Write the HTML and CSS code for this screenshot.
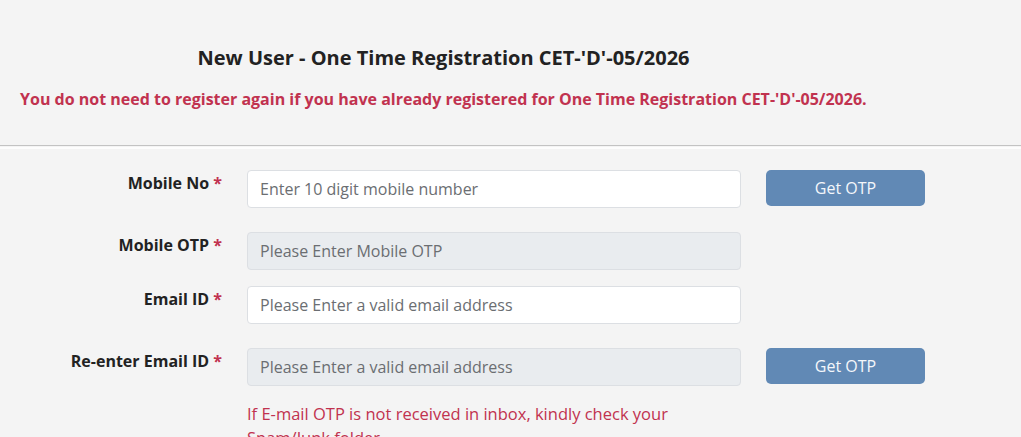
FILE: index.html
```html
<!DOCTYPE html>
<html lang="en">
<head>
    <meta charset="UTF-8">
    <meta name="viewport" content="width=device-width, initial-scale=1.0">
    <title>One Time Registration</title>
    <link rel="stylesheet" href="styles.css">
</head>
<body>
    <div class="reg-header">
        <h3 class="reg-title">New User - One Time Registration CET-'D'-05/2026</h3>
        <p class="reg-notice">You do not need to register again if you have already registered for One Time Registration CET-'D'-05/2026.</p>
    </div>
    <hr class="divider">

    <form class="reg-form" onsubmit="return false;">
        <div class="form-row row-wide">
            <label class="form-label" for="mobile">Mobile No <span class="req">*</span></label>
            <input class="form-control" id="mobile" type="text" placeholder="Enter 10 digit mobile number">
            <button class="btn-otp" type="button">Get OTP</button>
        </div>
        <div class="form-row row-narrow">
            <label class="form-label" for="mobile-otp">Mobile OTP <span class="req">*</span></label>
            <input class="form-control" id="mobile-otp" type="text" placeholder="Please Enter Mobile OTP" disabled>
        </div>
        <div class="form-row row-wide">
            <label class="form-label" for="email">Email ID <span class="req">*</span></label>
            <input class="form-control" id="email" type="email" placeholder="Please Enter a valid email address">
        </div>
        <div class="form-row">
            <label class="form-label" for="email2">Re-enter Email ID <span class="req">*</span></label>
            <input class="form-control" id="email2" type="email" placeholder="Please Enter a valid email address" disabled>
            <button class="btn-otp" type="button">Get OTP</button>
        </div>
        <div class="form-row">
            <span></span>
            <p class="spam-note">If E-mail OTP is not received in inbox, kindly check your Spam/Junk folder.</p>
        </div>
    </form>
</body>
</html>
```

FILE: styles.css
```css
body {
    margin: 0;
    background-color: #f4f4f4;
    font-family: "Open Sans", "Noto Sans", Arial, sans-serif;
    color: #212529;
}
.reg-header {
    padding: 45px 0 0 0;
    height: 100px; /* header ends at the divider */
}
.reg-title {
    margin: 0;
    width: 887px;
    text-align: center;
    font-size: 20px;
    font-weight: 700;
    line-height: 26px;
    color: #222;
}
.reg-notice {
    margin: 17px 0 0 20px;
    font-size: 16px;
    font-weight: 700;
    line-height: 22px;
    color: #c1324f;
}
.divider {
    margin: 0;
    height: 1px;
    border: none;
    border-top: 1px solid #c3c3c3;
    border-bottom: 2px solid #fdfdfd;
}
.reg-form {
    padding-top: 21px;
}
.form-row {
    display: grid;
    grid-template-columns: 222px 494px 159px;
    column-gap: 25px;
    align-items: start;
}
.row-wide {
    margin-bottom: 24px;
}
.row-narrow {
    margin-bottom: 16px;
}
.form-label {
    text-align: right;
    padding-top: 2px;
    font-size: 16px;
    font-weight: 700;
    line-height: 22px;
    color: #222;
}
.req {
    color: #c1324f;
}
.form-control {
    box-sizing: border-box;
    height: 38px;
    width: 100%;
    padding: 0 12px;
    border: 1px solid #dcdfe3;
    border-radius: 4px;
    background-color: #fff;
    font-family: inherit;
    font-size: 16px;
    color: #495057;
}
.form-control::placeholder {
    color: #6b6e72;
}
.form-control:disabled {
    background-color: #e9ecef;
}
.btn-otp {
    height: 36px;
    border: none;
    border-radius: 5px;
    background-color: #6189b5;
    color: #f4f7fb;
    font-family: inherit;
    font-size: 16px;
    cursor: pointer;
}
.spam-note {
    margin: 16px 0 0 0;
    font-size: 16.5px;
    line-height: 24px;
    color: #c1324f;
    max-width: 460px;
}
```
